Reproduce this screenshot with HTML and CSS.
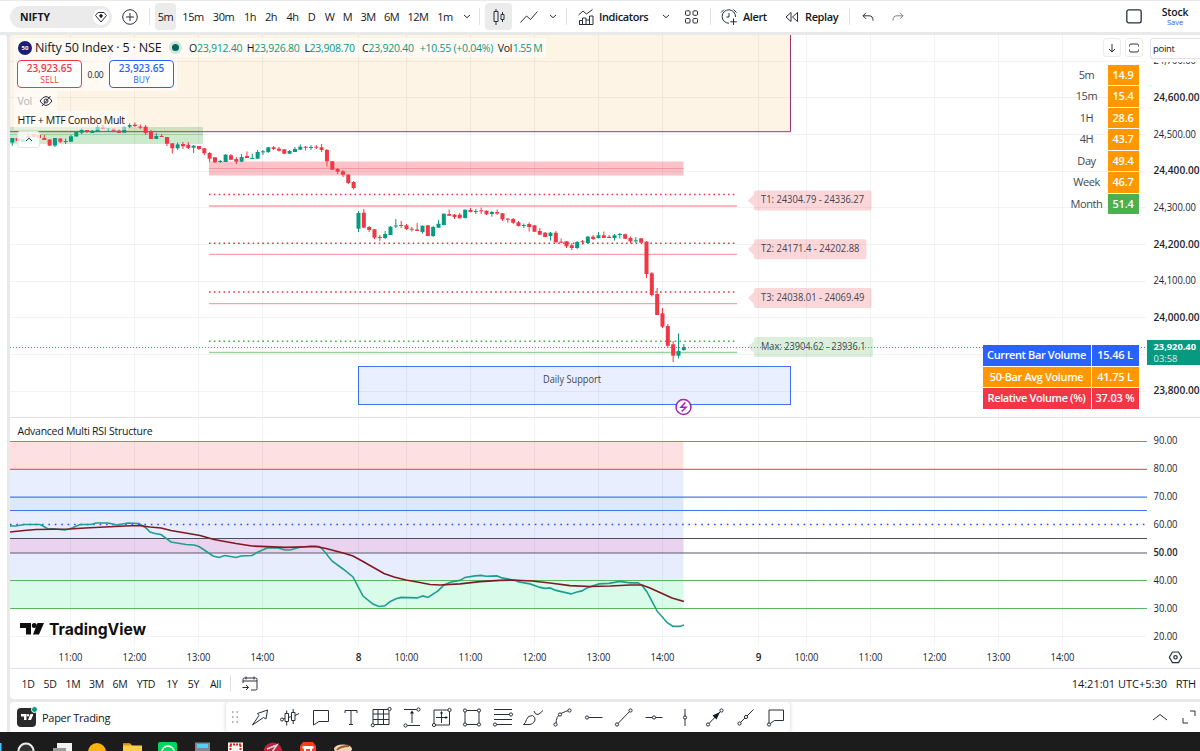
FILE: index.html
```html
<!DOCTYPE html>
<html lang="en">
<head>
    <meta charset="UTF-8">
    <meta name="viewport" content="width=device-width, initial-scale=1.0">
    <title>NIFTY 23,920.40 - Stock</title>
    <link rel="stylesheet" href="styles.css">
</head>
<body>
    <!-- Top Toolbar -->
    <header class="toolbar">
        <div class="symbol-pill">
            <span>NIFTY</span>
            <span class="gem">
                <svg width="14" height="14" viewBox="0 0 14 14"><path d="M4 2.500h6l2.500 3L7 12 1.500 5.500z" /><path class="solid" d="M7 3.700l2 2-2 2.500-2-2.500z" /></svg>
            </span>
        </div>
        <svg class="plus" width="18" height="18" viewBox="0 0 18 18"><circle cx="9" cy="9" r="7.300" /><path d="M9 5v8M5 9h8" /></svg>
        <i class="sep sep-symbol"></i>
        <nav class="intervals">
            <button class="active">5m</button>
            <button>15m</button>
            <button>30m</button>
            <button>1h</button>
            <button>2h</button>
            <button>4h</button>
            <button>D</button>
            <button>W</button>
            <button>M</button>
            <button>3M</button>
            <button>6M</button>
            <button>12M</button>
            <button>1m</button>
            <button><svg width="8" height="5" viewBox="0 0 8 5"><path d="M1 1l3 2.700L7 1" /></svg></button>
        </nav>
        <i class="sep"></i>
        <button class="chart-type active">
            <svg width="14" height="18" viewBox="0 0 14 18"><path d="M4 1v2.500M4 13.500V17M2 3.500h4v10H2zM10.500 4v2.500M10.500 11.500V14M9 6.500h3v5H9z" /></svg>
        </button>
        <svg class="line-type" width="18" height="14" viewBox="0 0 18 14"><path d="M.5 12.500L6.500 6l4 3.500 7-8" /></svg>
        <svg class="chev chev-type" width="14" height="5" viewBox="0 0 14 5"><path d="M4 1l3 2.700L10 1" /></svg>
        <i class="sep sep-type"></i>
        <svg class="ind-icon" width="16" height="16" viewBox="0 0 16 16"><path d="M.5 6L5 2l3.500 3L14.500.5M1.500 15v-3.500h3V9h3.500v6M8 11h3.500V7h3.500v8.500H1M4.500 11.500V15M11.500 11v4" /></svg>
        <span class="tool-text ind-text">Indicators</span>
        <svg class="chev chev-ind" width="14" height="5" viewBox="0 0 14 5"><path d="M4 1l3 2.700L10 1" /></svg>
        <svg class="tiles" width="13" height="14" viewBox="0 0 13 14"><rect x=".5" y=".8" width="4.500" height="4.500" rx="1" /><rect x="8" y=".8" width="4.500" height="4.500" rx="1" /><rect x=".5" y="8.500" width="4.500" height="4.500" rx="1" /><rect x="8" y="8.500" width="4.500" height="4.500" rx="1" /></svg>
        <i class="sep sep-tiles"></i>
        <svg class="alert-icon" width="18" height="18" viewBox="0 0 18 18"><path d="M15.500 9A6.700 6.700 0 1 0 9 15.200M9 5v4H6.500M1 4.500L4 1.500M13.500 1.500l3 3M13.500 10.500v6.500M10.300 13.800h6.500" /></svg>
        <span class="tool-text alert-text">Alert</span>
        <svg class="replay-icon" width="14" height="12" viewBox="0 0 14 12"><path d="M6 1.500v9L1 6zM12.500 1.500v9L7.500 6z" /></svg>
        <span class="tool-text replay-text">Replay</span>
        <i class="sep sep-replay"></i>
        <svg class="undo" width="12" height="10" viewBox="0 0 12 10"><path d="M4 .8L1 3.800l3 3M1 3.800h6q4 0 4 4.700" /></svg>
        <svg class="redo" width="12" height="10" viewBox="0 0 12 10"><path d="M8 .8l3 3-3 3M11 3.800H5q-4 0-4 4.700" /></svg>
        <svg class="layout-icon" width="16" height="15" viewBox="0 0 16 15"><rect x=".8" y=".8" width="14.400" height="13" rx="2" /></svg>
        <div class="layout-name"><b>Stock</b><small>Save</small></div>
    </header>

    <div class="workspace">
        <aside class="rail"></aside>
        <div class="main">
            <section class="chart-card">
                <div class="chart">
                    <svg id="chart" width="1190" height="633" viewBox="10 35 1190 633">
                        <!-- higher timeframe zones -->
                        <rect x="10" y="35" width="780" height="97" fill="#fef4e6" />
                        <rect x="10" y="127" width="193" height="17" fill="#4caf50" fill-opacity=".28" />
                        <path d="M10 134.500h193" stroke="#4caf50" stroke-opacity=".3" />
                        <path d="M10 131.700H790.500V35" class="zone-edge" />
                        <rect x="209" y="161.500" width="474.500" height="14" fill="#f23645" fill-opacity=".3" />
                        <path d="M209 168.500h474.500" stroke="#f23645" stroke-opacity=".3" />
                        <rect x="358.500" y="366.500" width="432" height="38" class="support" />

                        <!-- RSI bands -->
                        <g id="bands"></g>
                        <g id="grid"></g>
                        <g id="rsiLevels"></g>

                        <!-- targets -->
                        <g class="target red">
                            <path class="dots" d="M209 194.500h528M209 243.300h528M209 292h528" />
                            <path class="line" d="M209 206h528M209 254.300h528M209 303.700h528" />
                        </g>
                        <g class="target green">
                            <path class="dots" d="M209 341.300h528" />
                            <path class="line" d="M209 352.500h528" />
                        </g>
                        <g id="candles"></g>
                        <g id="tags"></g>
                        <path class="last-price" d="M10 347.500h1137" />

                        <path class="rsi" d="M10 526h6l8-1.500h16l3 1.500 5 3 5-.3 12 1.300 7-2 8-3.500h11l5-1.500h12l9 2 11-2 11 .5 7 4.500 4 4 5 1.500 6 1 10 7.500 15 2.500 8 .5 5 1.500 6 4 8 5.500 6 1.500 6-2 11 2 5-1.500 11-.5 5-3 10-4.500h11l7 2h5l9-2.500 12-1.500 8 .5 3 2 10 12.500 11 8 10 8 10 19 10 8 6 2.500 6-.8 5-4 6-3 5-1.300 16 .5 6-2 5 1.500 10-6.500 6-6 7-3 9-1.500 5-3 10-1.500 6-.5 5 .8 11-.3 5 2 13 2.500 4 1.500 11 2 10 3.500 5 1 5-.5 6 2.500 15 3.500 6-2 5-1 5-3 12-4 10-.5 11-2 10 1.500h8l4 2.500 5 6.500 10 19 10 11.500 6 4h7l4-1.500" />
                        <path class="rsi-ma" d="M10 532L24 530.500 36 529.500 70 529 85 528 105 527 125 526 139 525.500 150 527 161 528 171 530.500 200 535.500 214 539.500 236 543.500 252 546 285 547.300 316 546.500 326 548.500 345 553.500 353 556 363 561.500 384 573.500 394 577 406 580 420 582.500 430 584.500 440 585 460 583.800 480 581.700 500 580.300 512 580 532 581 550 583 570 585.700 590 586.500 610 586 630 585 642 585 650 588 661 593 672 598 684 601.500" />

                        <text x="543" y="383" textLength="58" lengthAdjust="spacingAndGlyphs" class="note">Daily Support</text>
                        <circle cx="683.500" cy="407" r="7.500" class="event" />
                        <path d="M685.300 402.500l-4.300 4.800h5l-4.300 4.200" class="bolt" />

                        <!-- watermark -->
                        <path d="M20 623h11v11.500h-5v-6.500h-6zM37.500 623h6.500l-5 11.500h-6z" fill="#0f0f0f" stroke="none" />
                        <circle cx="34.300" cy="625.500" r="2.500" fill="#0f0f0f" stroke="none" />
                        <text x="49" y="635" textLength="97" lengthAdjust="spacingAndGlyphs" class="brand">TradingView</text>

                        <path d="M10 417.500h1190" stroke="#e0e3eb" />
                        <g id="axis"></g>
                        <rect x="1147" y="340" width="53" height="25" fill="#089981" />
                        <text x="1153.500" y="350" textLength="42.500" lengthAdjust="spacingAndGlyphs" class="tag-price">23,920.40</text>
                        <text x="1153.500" y="361.500" textLength="24" lengthAdjust="spacingAndGlyphs" class="tag-time">03:58</text>
                        <path d="M1172.500 652h6l3.200 5.300-3.200 5.300h-6l-3.200-5.300z" class="gear" />
                        <circle cx="1175.500" cy="657.300" r="1.700" class="gear" />
                    </svg>

                    <!-- Legend -->
                    <div class="legend">
                        <div class="legend-title">
                            <span class="badge">50</span>
                            <span class="name">Nifty 50 Index · 5 · NSE</span>
                            <span class="status"></span>
                            <span class="ohlc">O<em>23,912.40</em></span>
                            <span class="ohlc">H<em>23,926.80</em></span>
                            <span class="ohlc">L<em>23,908.70</em></span>
                            <span class="ohlc">C<em>23,920.40</em></span>
                            <span class="change">+10.55 (+0.04%)</span>
                            <span class="vol">Vol</span><em>1.55 M</em>
                        </div>
                        <div class="trade">
                            <button class="sell"><b>23,923.65</b>SELL</button>
                            <span>0.00</span>
                            <button class="buy"><b>23,923.65</b>BUY</button>
                        </div>
                        <div class="study muted">Vol
                            <svg width="14" height="12" viewBox="0 0 14 12"><path d="M1 6q6-9 12 0-6 9-12 0zM3 11L11.500 1" /><circle cx="7" cy="6" r="2" /></svg>
                        </div>
                        <div class="study combo">HTF + MTF Combo Mult</div>
                        <button class="collapse"><svg width="8" height="5" viewBox="0 0 8 5"><path d="M1 4l3-2.800L7 4" /></svg></button>
                    </div>
                    <div class="rsi-title">Advanced Multi RSI Structure</div>

                    <!-- Multi timeframe RSI table -->
                    <table class="tf-table">
                        <tr><th>5m</th><td>14.9</td></tr>
                        <tr><th>15m</th><td>15.4</td></tr>
                        <tr><th>1H</th><td>28.6</td></tr>
                        <tr><th>4H</th><td>43.7</td></tr>
                        <tr><th>Day</th><td>49.4</td></tr>
                        <tr><th>Week</th><td>46.7</td></tr>
                        <tr><th>Month</th><td class="up">51.4</td></tr>
                    </table>

                    <table class="vol-table">
                        <tr class="blue"><td>Current Bar Volume</td><td>15.46 L</td></tr>
                        <tr class="orange"><td>50-Bar Avg Volume</td><td>41.75 L</td></tr>
                        <tr class="red"><td>Relative Volume (%)</td><td>37.03 %</td></tr>
                    </table>

                    <div class="pane-tools">
                        <button><svg width="10" height="10" viewBox="0 0 10 10"><path d="M5 1v8M2 6l3 3 3-3" /></svg></button>
                        <button><svg width="10" height="10" viewBox="0 0 10 10"><path d="M.5 3.500v-1q0-1.500 1.500-1.500h6q1.500 0 1.500 1.500v1M.5 6.500v1q0 1.500 1.500 1.500h6q1.500 0 1.500-1.500v-1" /></svg></button>
                        <span class="unit">point</span>
                    </div>
                </div>

                <!-- Date ranges -->
                <div class="ranges">
                    <div class="range-list">
                        <span>1D</span><span>5D</span><span>1M</span><span>3M</span><span>6M</span><span>YTD</span><span>1Y</span><span>5Y</span><span>All</span>
                    </div>
                    <i class="sep"></i>
                    <svg class="goto" width="16" height="16" viewBox="0 0 16 16"><path d="M1 7V3.500Q1 2 2.500 2h11Q15 2 15 3.500v9q0 1.500-1.500 1.500H9M1 5h14M4 .5v3M12 .5v3M.5 11.500h6M4 9l2.500 2.500L4 14" /></svg>
                    <span class="clock">14:21:01 UTC+5:30</span>
                    <span class="session">RTH</span>
                </div>
            </section>

            <!-- Bottom panel -->
            <footer class="panel">
                <span class="broker">
                    <svg width="12" height="8" viewBox="0 0 12 8"><path d="M0 1h5.500v6H3V3.500H0zM9.500 1H12.500L10 7H7z" /><circle cx="7" cy="2.200" r="1.200" /></svg>
                </span>
                <span class="broker-name">Paper Trading</span>
                <div class="drawbar">
                    <svg class="grip" width="8" height="12" viewBox="0 0 8 12"><path d="M1 1h1.500M5.500 1H7M1 6h1.500M5.500 6H7M1 11h1.500M5.500 11H7" /></svg>
                    <svg viewBox="0 0 22 22"><path d="M3.500 19l6.500-9.500-1.500-2L18.500 4l-1.500 9-2.500-1.500z" /></svg>
                    <svg viewBox="0 0 22 22"><path d="M6 7.500h3.500v8H6zM7.700 4.500v3M7.700 15.500v4M12.500 6.500H16v8h-3.500zM14.200 3v3.500M14.200 14.500v3.500M4 13l2-.8M9.500 11.500l3-1M16 9.500L20 7.500" /><circle cx="3" cy="13.500" r="1.500" /></svg>
                    <svg viewBox="0 0 22 22"><path d="M3.500 4.500h15v11H9l-5.500 3.500z" /></svg>
                    <svg viewBox="0 0 22 22"><path d="M5 7V4.500h12V7M11 4.500v14M9 18.500h4" /></svg>
                    <svg viewBox="0 0 22 22"><path d="M3 3.500h16v15H3zM3 8h16M3 13.500h16M8 3.500v15M13.500 3.500v15" /><circle cx="19.500" cy="3" r="1.600" /><circle cx="2.800" cy="19.200" r="1.600" /></svg>
                    <svg viewBox="0 0 22 22"><path d="M3 3.500h14M4 19.500h15M11 6v11" /><path class="solid" d="M11 4.500l2 3H9z" /><circle cx="17.500" cy="3.500" r="1.600" /><circle cx="4.500" cy="19.500" r="1.600" /></svg>
                    <svg viewBox="0 0 22 22"><path d="M3 4h15.500v15H3zM5 11.500h10M10.500 17V6" /><path class="solid" d="M10.500 5l1.500 2.500H9zM17 11.500l-2.500-1.500v3z" /><circle cx="18.500" cy="4" r="1.600" /><circle cx="3" cy="19" r="1.600" /></svg>
                    <svg viewBox="0 0 22 22"><path d="M4 4.500h14v14H4z" /><circle cx="4" cy="4.500" r="1.600" /><circle cx="18" cy="4.500" r="1.600" /><circle cx="4" cy="18.500" r="1.600" /><circle cx="18" cy="18.500" r="1.600" /></svg>
                    <svg viewBox="0 0 22 22"><path d="M2 3.500h18M2 8.500h18M2 13.500h18M2 18.500h18" /><circle cx="19" cy="8.500" r="1.600" /><circle cx="3" cy="18.500" r="1.600" /></svg>
                    <svg viewBox="0 0 22 22"><path d="M1.500 18.500q2-1 3-5t6-4q3 1.500 2.500 4.500-1.500 4.500-6 4.500zM12 5q1 4 4 3.500 1.500-.5 5-4" /></svg>
                    <svg viewBox="0 0 22 22"><path d="M4 18q0-8 5-10.500T18 4" /><circle cx="3.500" cy="18.500" r="1.600" /><circle cx="8" cy="8.500" r="1.600" /><circle cx="17.500" cy="4.500" r="1.600" /></svg>
                    <svg viewBox="0 0 22 22"><path d="M5 11.500h14.500" /><circle cx="4" cy="11.500" r="1.600" /></svg>
                    <svg viewBox="0 0 22 22"><path d="M4.500 18L17 5" /><circle cx="4" cy="18.500" r="1.600" /><circle cx="17.500" cy="4.500" r="1.600" /></svg>
                    <svg viewBox="0 0 22 22"><path d="M2.500 11.500h17" /><circle cx="11" cy="11.500" r="1.600" /></svg>
                    <svg viewBox="0 0 22 22"><path d="M11 3v17" /><circle cx="11" cy="11.500" r="1.600" /></svg>
                    <svg viewBox="0 0 22 22"><path d="M4.500 18L17 5" /><path class="solid" d="M16 6l-7.500 3.500 4 4z" /><circle cx="4" cy="18.500" r="1.600" /><circle cx="17.500" cy="4.500" r="1.600" /></svg>
                    <svg viewBox="0 0 22 22"><path d="M4.500 17.500L18.500 3.500" /><circle cx="4.500" cy="17.500" r="1.600" /><circle cx="11" cy="11" r="1.600" /></svg>
                    <svg viewBox="0 0 22 22"><path d="M4 18.500V4h14.500v10.500H9.500z" /><circle cx="4" cy="18.500" r="1.600" /></svg>
                </div>
                <svg class="panel-up" width="16" height="8" viewBox="0 0 16 8"><path d="M1 7l7-5.500L15 7" /></svg>
                <svg class="panel-max" width="14" height="14" viewBox="0 0 14 14"><path d="M8 1h5v5M1 8v5h5" /></svg>
            </footer>
        </div>
    </div>

    <!-- Desktop taskbar -->
    <div class="taskbar">
        <svg width="1200" height="19" viewBox="0 732 1200 19">
            <path d="M0 743h1.500v8H0z" fill="#4cc2ff" />
            <circle cx="26" cy="751" r="7.500" fill="#333" stroke="#eee" stroke-width="2" />
            <path d="M57 743h15v8H57z" fill="#f2f2f2" /><path d="M53 748h13v3H53z" fill="#999" />
            <circle cx="97" cy="752" r="9" fill="#fbb40c" />
            <path d="M123 743.500h7l2 2h10v6h-19z" fill="#ffcf48" /><path d="M123 743.500h7l1 2h-8z" fill="#d99a10" />
            <rect x="158" y="742" width="19" height="12" rx="2" fill="#04d45c" />
            <circle cx="168" cy="752" r="6" fill="none" stroke="#fff" stroke-width="1.500" />
            <path d="M195 742.500h15v9h-15z" fill="#7d8790" /><path d="M197 744h11v4h-11z" fill="#4fd0f5" />
            <path d="M228 742.500h15v9h-15z" fill="#f5f5f5" /><path d="M230 744.500h11M230.500 745v6M240.500 745v6" stroke="#d5281c" stroke-width="2" stroke-dasharray="2 1" fill="none" />
            <circle cx="273" cy="752" r="9.500" fill="#bc2339" /><path d="M267 749l10-4-5 7" stroke="#ddd" stroke-width="1.500" fill="none" />
            <path d="M300 746l3-4h10l3 4v6h-16z" fill="#fb3d18" /><path d="M303 746h10l1 2-2 1v2h-2v-2h-4v2h-2v-2l-2-1z" fill="#fff" />
            <ellipse cx="343" cy="749" rx="9" ry="4.500" fill="#f0d6b8" /><path d="M337 750q3-4 12-4" stroke="#a05c2b" stroke-width="2" fill="none" />
        </svg>
    </div>

    <script src="chart.js"></script>
</body>
</html>
```

FILE: styles.css
```css
* {
    margin: 0;
    padding: 0;
    box-sizing: border-box;
}

body {
    width: 1200px;
    height: 751px;
    overflow: hidden;
    background: #e9e9e9;
    color: #131722;
    font-family: 'Trebuchet MS', 'Open Sans', 'Noto Sans', sans-serif;
    font-size: 11px;
    display: flex;
    flex-direction: column;
}

button {
    border: none;
    background: none;
    font: inherit;
    color: inherit;
}

svg {
    display: block;
    flex: none;
    fill: none;
    stroke: #2a2e39;
}

svg .solid {
    fill: #131722;
    stroke: none;
}

em {
    font-style: normal;
    color: #089981;
}

.sep {
    width: 1px;
    height: 17px;
    flex: none;
    background: #e0e3eb;
}

/* Top Toolbar */
.toolbar {
    height: 31px;
    margin-top: 1px;
    background: white;
    display: flex;
    align-items: center;
    flex: none;
}

.symbol-pill {
    width: 102px;
    height: 22px;
    margin-left: 10px;
    padding: 0 3px 0 10px;
    border-radius: 11px;
    background: #ebebeb;
    font-size: 10.500px;
    font-weight: 700;
    letter-spacing: -0.1px;
    display: flex;
    align-items: center;
    justify-content: space-between;
}

.gem {
    width: 16px;
    height: 16px;
    border-radius: 50%;
    background: white;
    display: flex;
    align-items: center;
    justify-content: center;
}

.plus {
    margin-left: 9px;
}

.sep-symbol {
    margin-left: 10px;
}

.intervals {
    margin-left: 5px;
    display: grid;
    grid-template-columns: 21px 34px 27px 26px 16px 27px 11px 25px 11px 30px 17px 36px 18px 25px;
}

.intervals button {
    height: 27px;
    font-weight: 500;
    letter-spacing: -0.5px;
    white-space: nowrap;
    display: flex;
    align-items: center;
    justify-content: center;
}

.toolbar .active {
    background: #ebebeb;
    border-radius: 4px;
}

.chart-type {
    width: 27px;
    height: 27px;
    margin-left: 5px;
    display: flex;
    align-items: center;
    justify-content: center;
}

.line-type {
    margin-left: 8px;
}

.chev-type {
    margin-left: 8px;
}

.sep-type {
    margin-left: 6px;
}

.tool-text {
    font-weight: 600;
    letter-spacing: -0.400px;
    white-space: nowrap;
}

.ind-icon {
    margin-left: 11px;
}

.ind-text {
    width: 51px;
    margin-left: 5px;
}

.chev-ind {
    margin-left: 9px;
}

.tiles {
    margin-left: 12px;
}

.sep-tiles {
    margin-left: 12px;
}

.alert-icon {
    margin-left: 9px;
}

.alert-text {
    width: 26px;
    margin-left: 5px;
}

.replay-icon {
    margin-left: 16px;
}

.replay-text {
    width: 34px;
    margin-left: 6px;
}

.sep-replay {
    margin-left: 10px;
}

.undo {
    margin-left: 12px;
}

.redo {
    margin-left: 18px;
    opacity: 0.6;
}

.layout-icon {
    margin-left: auto;
    stroke-width: 1.3;
}

.layout-name {
    width: 30px;
    margin: 1px 10px 0 18px;
    text-align: center;
    letter-spacing: -0.2px;
}

.layout-name b {
    display: block;
    font-size: 10.500px;
    font-weight: 600;
    line-height: 11px;
}

.layout-name small {
    display: block;
    font-size: 7.500px;
    line-height: 9px;
    letter-spacing: 0;
    color: #2962ff;
}

/* Workspace */
.workspace {
    height: 697px;
    margin-top: 3px;
    display: flex;
    gap: 3px;
}

.rail {
    width: 7px;
    background: white;
    border-radius: 0 4px 0 0;
}

.main {
    flex: 1;
    display: flex;
    flex-direction: column;
    gap: 3px;
}

.chart-card {
    height: 664px;
    background: white;
    border-radius: 4px 0 0 4px;
    overflow: hidden;
}

.chart {
    position: relative;
    height: 634px;
    border-bottom: 1px solid #e0e3eb;
}

#chart > rect {
    stroke: none;
}

.zone-edge {
    stroke: #9b3a70;
}

#chart > .support {
    fill: rgba(41, 98, 255, 0.1);
    stroke: #3f72f5;
}

.target .dots {
    stroke-width: 1.600;
    stroke-dasharray: 1.600 3.250;
}

.target .line {
    stroke-width: 1.300;
}

.red .dots {
    stroke: #f0303f;
}

.red .line {
    stroke: #fba0a7;
}

.green .dots {
    stroke: #45aa49;
}

.green .line {
    stroke: #98d29b;
}

.last-price {
    stroke: #27a68f;
    stroke-dasharray: 1 2;
}

.rsi {
    stroke: #1f9d90;
    stroke-width: 1.600;
}

.rsi-ma {
    stroke: #801922;
    stroke-width: 1.700;
}

.event {
    fill: white;
    stroke: #9c27b0;
    stroke-width: 1.500;
}

.bolt {
    stroke: #9c27b0;
    stroke-width: 1.500;
}

.gear {
    stroke-width: 1.200;
}

.chart text {
    stroke: none;
    fill: #1e222d;
    font-size: 10px;
}

.chart text.strong {
    font-weight: 600;
}

.chart text.note {
    fill: #434651;
}

.chart text.brand {
    font-family: 'Inter', sans-serif;
    font-size: 16.500px;
    font-weight: 700;
    fill: #0f0f0f;
}

.chart text.tag-price {
    fill: white;
    font-size: 9.500px;
    font-weight: 700;
}

.chart text.tag-time {
    fill: #d8f0ec;
    font-size: 9px;
}

/* Legend */
.legend {
    position: absolute;
    top: 3px;
    left: 4px;
}

.legend-title {
    width: 532px;
    height: 19px;
    padding-left: 4px;
    background: rgba(255, 255, 255, 0.5);
    display: flex;
    align-items: center;
    white-space: nowrap;
}

.badge {
    width: 14px;
    height: 14px;
    border-radius: 50%;
    background: #1a1f71;
    color: white;
    font-size: 6px;
    font-weight: 700;
    line-height: 14px;
    text-align: center;
}

.name {
    width: 134px;
    margin-left: 3px;
    font-size: 12.500px;
    letter-spacing: -0.170px;
}

.status {
    width: 13px;
    height: 13px;
    margin-right: 7px;
    border: 3px solid #cfe8df;
    border-radius: 50%;
    background: #056656;
}

.legend-title .ohlc {
    width: 57.700px;
}

.ohlc,
.change,
.vol,
.legend-title em {
    font-size: 10.500px;
    letter-spacing: -0.250px;
}

.change {
    width: 78px;
    color: #089981;
}

.vol {
    width: 15px;
}

.legend-title .vol + em {
    letter-spacing: -0.600px;
}

.trade {
    width: 163px;
    height: 34px;
    padding: 0 0 0 3px;
    background: rgba(255, 255, 255, 0.5);
    display: flex;
    align-items: center;
}

.trade button {
    width: 65px;
    height: 28px;
    border: 1px solid;
    border-radius: 4px;
    background: white;
    font-size: 8.500px;
    line-height: 11px;
    display: flex;
    flex-direction: column;
    align-items: center;
    justify-content: center;
}

.trade b {
    font-size: 10px;
    font-weight: 600;
    letter-spacing: 0;
}

.trade span {
    width: 27px;
    font-size: 8.500px;
    letter-spacing: -0.2px;
    text-align: center;
}

.sell {
    color: #f23645;
}

.trade .buy {
    color: #2962ff;
}

.study {
    height: 19px;
    padding-left: 3.500px;
    background: rgba(255, 255, 255, 0.5);
    font-size: 10.500px;
    letter-spacing: -0.350px;
    line-height: 19px;
    white-space: nowrap;
}

.muted {
    width: 43px;
    height: 20px;
    color: #b2b5be;
    display: flex;
    align-items: center;
    justify-content: space-between;
    padding-right: 4px;
}

.combo {
    width: 114px;
}

.collapse {
    width: 23px;
    height: 17px;
    margin: 1px 0 0 3px;
    border: 1px solid #e0e3eb;
    border-radius: 3px;
    background: rgba(255, 255, 255, 0.8);
    display: flex;
    align-items: center;
    justify-content: center;
}

.rsi-title {
    position: absolute;
    top: 388px;
    left: 7.500px;
    font-size: 10.500px;
    letter-spacing: -0.250px;
    line-height: 16px;
}

/* Tables */
.tf-table,
.vol-table {
    position: absolute;
    right: 60.500px;
    border-spacing: 1px;
}

.tf-table {
    top: 28.500px;
}

.tf-table th,
.tf-table td,
.vol-table td {
    height: 20.500px;
    line-height: 18px;
    text-align: center;
    white-space: nowrap;
}

.tf-table th {
    width: 40px;
    font-size: 11px;
    font-weight: 400;
    letter-spacing: -0.4px;
    color: #434651;
}

.tf-table td {
    width: 31px;
    background: #ff9800;
    color: white;
    font-size: 11px;
    font-weight: 600;
    letter-spacing: -0.2px;
}

.tf-table td.up {
    background: #4caf50;
}

.vol-table {
    top: 309px;
    table-layout: fixed;
    width: 158px;
    font-size: 11px;
    letter-spacing: -0.380px;
    color: white;
    font-weight: 600;
}

.vol-table td:first-child {
    width: 108px;
}

.vol-table td:last-child {
    letter-spacing: -0.2px;
}

.vol-table .blue {
    background: #2962ff;
}

.vol-table .orange {
    background: #ff9800;
}

.vol-table .red {
    background: #f23645;
}

.pane-tools {
    position: absolute;
    top: 3px;
    right: 0;
    display: flex;
    gap: 4px;
}

.pane-tools button {
    width: 18px;
    height: 19px;
    border: 1px solid #ebebeb;
    border-radius: 3px;
    background: white;
    display: flex;
    align-items: center;
    justify-content: center;
}

.pane-tools button + button {
    margin-right: -1px;
}

.unit {
    width: 50px;
    height: 21px;
    margin-left: 4px;
    padding-left: 2px;
    border: 1px solid #e0e3eb;
    border-right: none;
    border-radius: 3px 0 0 3px;
    box-shadow: 0 3px 0 white;
    background: white;
    font-size: 9.500px;
    letter-spacing: -0.3px;
    line-height: 19px;
}

/* Date ranges */
.ranges {
    height: 29px;
    padding: 0 4px 0 7px;
    font-size: 10.500px;
    letter-spacing: -0.3px;
    display: flex;
    align-items: center;
    white-space: nowrap;
}

.range-list {
    margin-right: 2px;
    display: grid;
    grid-template-columns: 22px 22px 24px 23px 24px 28px 24px 19px 25px;
    text-align: center;
}

.goto {
    margin-left: 11px;
}

.clock {
    width: 95px;
    margin-left: auto;
    margin-right: 9px;
    font-size: 11px;
    letter-spacing: 0;
}

.session {
    font-size: 11px;
    letter-spacing: -0.2px;
}

/* Bottom panel */
.panel {
    height: 30px;
    padding: 0 4px 0 7px;
    background: white;
    border-radius: 4px 0 0 0;
    display: flex;
    align-items: center;
}

.broker {
    position: relative;
    width: 19px;
    height: 19px;
    border-radius: 4px;
    background: #2a2a2a;
    display: flex;
    align-items: center;
    justify-content: center;
}

.broker::after {
    content: '';
    position: absolute;
    top: -2px;
    right: -2px;
    width: 5px;
    height: 5px;
    border: 1px solid white;
    border-radius: 50%;
    background: #089981;
    box-sizing: content-box;
}

.broker svg {
    fill: white;
    stroke: none;
}

.broker-name {
    width: 184px;
    margin-left: 6px;
    font-size: 11px;
    letter-spacing: -0.280px;
}

.drawbar {
    width: 564px;
    height: 30px;
    border-radius: 4px;
    box-shadow: 0 0 4px rgba(0, 0, 0, 0.2);
    clip-path: inset(0 -5px 0 -5px);
    display: flex;
    align-items: center;
}

.drawbar svg {
    width: 22px;
    height: 22px;
    margin-right: 8.350px;
}

.drawbar circle {
    fill: white;
}

.drawbar .grip {
    width: 8px;
    height: 12px;
    margin: 0 10px 0 5px;
    stroke: #9598a1;
    stroke-width: 1.500;
}

.panel-up {
    margin-left: auto;
}

.panel-max {
    margin-left: 14px;
}

/* Desktop taskbar */
.taskbar {
    height: 19px;
    flex: none;
    background: #1c1c1c;
}

.taskbar svg {
    stroke: none;
}
```

FILE: chart.js
```js
const NS = 'http://www.w3.org/2000/svg';

function add(parent, tag, attrs, text) {
    const el = document.createElementNS(NS, tag);
    for (const key in attrs) el.setAttribute(key, attrs[key]);
    if (text) {
        el.textContent = text;
        el.setAttribute('lengthAdjust', 'spacingAndGlyphs');
    }
    document.getElementById(parent).appendChild(el);
    return el;
}

// 5 minute bars: direction, high, body top, body bottom, low
const bars = [
    ['g',138,138,142.5,145.7], ['r',135.5,138,141,141], ['g',139,139,142,142], ['r',133,136,138,138], ['r',134,134,137,137],
    ['r',135,135,138,138], ['r',135,138,140,140], ['r',139.5,139.5,145.7,145.7], ['g',138,138,145.5,147], ['r',138.5,138.5,141.7,143],
    ['g',138.5,141,142,144], ['g',135,136.3,141.7,141.7], ['g',131,132,136.5,136.5], ['g',128,129.7,132.7,134], ['r',130,130,132,133],
    ['g',130,130.7,133,133], ['g',125,127,132,132], ['r',125,127.7,129,129], ['g',128,128.3,129.3,131], ['r',128.7,128.7,130.7,130.7],
    ['r',129,130.7,133,133], ['g',126,127,132.7,132.7], ['g',123.5,125,126.7,128], ['r',122.5,124.7,126,127], ['r',124.5,126.7,127.7,129],
    ['r',125,126.7,133,135], ['r',130,131.7,139,139], ['g',133,136,139,139], ['r',134,136,137,137], ['r',137,137,143.7,146],
    ['r',143.3,143.3,148.3,153.5], ['g',142.5,144.3,148.3,150], ['r',142,144,146.3,149], ['r',142,144.7,148,149], ['g',145,145.7,147.7,153],
    ['r',146,146,149,150], ['r',148,148.3,153.3,155], ['r',152,153,158.7,162], ['r',157,157.3,162.3,163], ['g',160,161,162,163],
    ['g',154,154.7,162,162], ['r',154,155.3,159.7,160], ['r',157,159,161.7,164], ['g',154,157,161.7,162], ['r',151.5,156,158,158],
    ['g',153.7,158,159,159], ['g',150,152,158.7,158.7], ['g',150,151.3,152.3,155], ['g',147,147.3,152,153], ['r',146,147.3,149,150],
    ['r',147,148.7,150.7,151.5], ['r',149,149.3,153.7,154], ['g',150,151,153.7,154], ['g',147,149,152,152], ['g',144.5,146.7,149.7,150],
    ['r',146,146.7,147.7,150.5], ['g',145,147,148,150], ['r',145,146.7,147.7,149], ['r',144,147.3,150,152], ['r',149,150,161.3,166.5],
    ['r',161,161.3,169.7,170], ['r',168,169,171.7,174], ['r',170,171.3,174.7,177], ['r',174,174.7,183,184], ['r',181,182,188,189.5],
    ['g',211,213,228.7,232], ['r',209,212.7,227.7,228], ['r',226,227,230,232], ['r',229,229.3,237.7,239], ['r',235,237,238,241],
    ['g',231,234,238,239], ['g',226,226.7,235,235], ['g',219,225.5,226.5,228], ['r',221,225,226,228], ['r',224,225.3,229,230],
    ['r',227,228.7,229.7,231.5], ['r',223,229.5,231,231], ['g',225.5,225.7,232,233.5], ['r',225,225.3,236,236], ['g',226,227,236,237],
    ['g',220,223.7,227.7,228], ['g',213.5,213.7,225,225.5], ['r',209.5,214,215.7,216], ['r',214,214.7,217,219], ['r',213,214.7,218.3,218.5],
    ['g',209.5,209.7,218,218.5], ['r',208,210,212,212.5], ['g',209,211,212,214], ['r',207.5,210.3,211.3,214], ['r',210.5,210.7,214.3,215],
    ['g',211,212,214,216.7], ['r',209.5,212,213.5,215], ['r',213,213.3,219.3,221], ['r',218,218.7,219.7,222.5], ['r',218,219,222.7,224],
    ['r',221,222.3,226,226.5], ['g',223.5,225,226,228], ['r',222.5,224,227,231.5], ['r',225,225.3,231.7,232], ['r',228,231,234.7,235],
    ['r',232,232.7,237,237], ['g',232,232.7,236,240.5], ['r',231,232.7,242.3,242.5], ['r',238.5,241.7,242.7,243], ['r',241,241.3,246.3,248],
    ['r',243,245.3,248,250], ['g',241,242,248,249], ['r',240,241.3,242.3,244.5], ['g',236,236.7,243,243.5], ['r',235,236.7,239,240],
    ['g',232,235.3,238,238.5], ['r',231.5,235.3,238,238], ['r',235,236.7,238,238], ['g',234,235.3,238,240.5], ['g',233,234,235,238.5],
    ['r',233.5,234.3,238.7,239], ['r',236.5,238,241.3,243.5], ['g',237,240.3,241.3,243], ['r',238,238.3,242.7,243], ['r',241,241.7,274,278],
    ['r',272,273.3,295,296.5], ['r',288,294,315,315], ['r',308,313.3,326.7,328], ['r',324,326,345.7,348], ['r',341,344.3,355.7,362],
    ['g',333.5,351,355.7,358.5], ['g',344,347,350,351]
];

// session break sits between bars 64 and 65
bars.forEach(([dir, high, top, bottom, low], i) => {
    const x = i < 65 ? 12.3 + i * 5.333 : 358.5 + (i - 65) * 5.333;
    const fill = dir === 'g' ? '#089981' : '#f23645';
    add('candles', 'rect', { x: x - 0.5, y: high, width: 1, height: low - high, fill, stroke: 'none' });
    add('candles', 'rect', { x: x - 2, y: top, width: 4, height: bottom - top, fill, stroke: 'none' });
});

// grid
[61.5, 97.5, 134.5, 171.5, 207.5, 244.5, 281.5, 317.5, 354.5, 391.5, 636.5].forEach(y => {
    add('grid', 'path', { d: `M10 ${y}H1146`, stroke: '#2a2e39', 'stroke-opacity': 0.06 });
});

const times = [
    [70.5, '11:00'], [134.5, '12:00'], [198.5, '13:00'], [262.5, '14:00'], [358.5, '8'],
    [406.5, '10:00'], [470.5, '11:00'], [534.5, '12:00'], [598.5, '13:00'], [662.5, '14:00'], [758.5, '9'],
    [806.5, '10:00'], [870.5, '11:00'], [934.5, '12:00'], [998.5, '13:00'], [1062.5, '14:00']
];
times.forEach(([x, label]) => {
    add('grid', 'path', { d: `M${x} 35V645`, stroke: '#2a2e39', 'stroke-opacity': 0.06 });
    if (label.length > 1) {
        add('axis', 'text', { x: x - 12, y: 660.5, textLength: 24 }, label);
    } else {
        add('axis', 'text', { x, y: 660.5, 'text-anchor': 'middle', class: 'strong' }, label);
    }
});

// RSI bands and levels
[
    [441, 28, '#fde1e2'], [469, 28, '#e8eefe'], [497, 13.5, '#dde7fe'], [510.5, 28, '#e8edfe'],
    [538.5, 14.5, '#ead3ee'], [553, 27.5, '#e8edfe'], [580.5, 28, '#d8fbea']
].forEach(([y, height, fill]) => {
    add('bands', 'rect', { x: 10, y, width: 673.5, height, fill, stroke: 'none' });
});
[
    [441.5, '#e5626d'], [469.4, '#e5626d'], [497.2, '#4a78ee'], [510.5, '#3f72f5'],
    [538.5, '#4b4e5c'], [553, '#5a5d6b'], [580.5, '#5db760'], [608.5, '#5db760']
].forEach(([y, stroke]) => {
    add('rsiLevels', 'path', { d: `M10 ${y}H1147`, stroke, 'stroke-width': 1.2 });
});
add('rsiLevels', 'path', { d: 'M10 524.500H1147', stroke: '#1f4fff', 'stroke-width': 1.6, 'stroke-dasharray': '1.600 4.800' });

// axis labels
[
    [97, '24,600.00', 1], [134, '24,500.00'], [170.5, '24,400.00', 1], [207, '24,300.00'], [244, '24,200.00', 1],
    [280.5, '24,100.00'], [317, '24,000.00', 1], [390.5, '23,800.00', 1]
].forEach(([y, label, strong]) => {
    add('axis', 'text', { x: 1153.5, y: y + 3.7, textLength: strong ? 46 : 42.5, class: strong ? 'strong' : '' }, label);
});
add('axis', 'text', { x: 1153.5, y: 64, textLength: 42.5 }, '24,700.00');
for (let level = 90; level >= 20; level -= 10) {
    const y = 441 + (90 - level) * 2.79;
    add('axis', 'text', { x: 1153.5, y: y + 3.2, textLength: 24, class: level === 50 ? 'strong' : '' }, level + '.00');
}

// target tags
[
    [200.5, 871.5, 103, 'T1: 24304.79 - 24336.27', 'r'], [249.2, 866.5, 98.5, 'T2: 24171.4 - 24202.88', 'r'],
    [298, 871.5, 103.5, 'T3: 24038.01 - 24069.49', 'r'], [347, 873, 104.5, 'Max: 23904.62 - 23936.1', 'g']
].forEach(([y, right, length, label, dir]) => {
    add('tags', 'path', {
        d: `M748 ${y}L754 ${y - 6}V${y - 8}q0-2 2-2H${right - 2}q2 0 2 2v16q0 2-2 2H756q-2 0-2-2v-2z`,
        fill: dir === 'g' ? '#4caf50' : '#f23645', 'fill-opacity': 0.2, stroke: 'none'
    });
    add('tags', 'text', { x: 761, y: y + 2.5, textLength: length, class: 'note' }, label);
});
```
